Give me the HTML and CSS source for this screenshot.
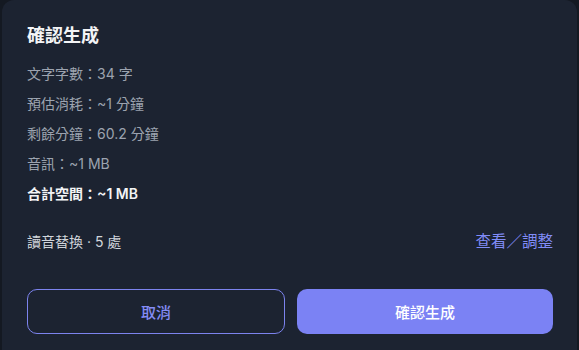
FILE: index.html
```html
<!DOCTYPE html>
<html>

<head>
  <meta charset="UTF-8">
  <meta name="viewport" content="width=device-width, initial-scale=1.0">
  <title>確認生成</title>
  <link rel="stylesheet" href="styles.css">
</head>

<body>
  <div class="dialog">
    <h2 class="title">確認生成</h2>
    <ul class="stats">
      <li>文字字數：34 字</li>
      <li>預估消耗：~1 分鐘</li>
      <li>剩餘分鐘：60.2 分鐘</li>
      <li>音訊：~1 MB</li>
      <li class="total">合計空間：~1 MB</li>
    </ul>
    <div class="replace">
      <span>讀音替換 · 5 處</span>
      <a href="#" class="link">查看／調整</a>
    </div>
    <div class="actions">
      <button class="btn btn-outline">取消</button>
      <button class="btn btn-primary">確認生成</button>
    </div>
  </div>
</body>

</html>
```

FILE: styles.css
```css
html {
  background: #141922;
}

body {
  margin: 0;
  font-family: "Inter", "Noto Sans CJK TC", sans-serif;
  overflow: hidden;
}

.dialog {
  margin-left: 2px;
  width: 575px;
  height: 350px;
  box-sizing: border-box;
  padding: 24px 24px 0 25px;
  background: #1c2331;
  border-radius: 12px 12px 0 0;
}

.title {
  margin: 0 0 16px;
  font-size: 18px;
  line-height: 24px;
  font-weight: 700;
  color: #f3f4f6;
}

.stats {
  list-style: none;
  margin: 0;
  padding: 0;
  display: flex;
  flex-direction: column;
  gap: 10px;
}

.stats li {
  font-size: 14px;
  line-height: 20px;
  color: #9ca3af;
}

.stats .total {
  color: #f3f4f6;
  font-weight: 600;
}

.replace {
  display: flex;
  justify-content: space-between;
  align-items: center;
  margin-top: 27px;
  font-size: 14px;
  line-height: 22px;
  color: #d1d5db;
}

.link {
  font-size: 15.5px;
  color: #818cf8;
  text-decoration: none;
}

.actions {
  display: flex;
  gap: 12px;
  margin-top: 36px;
}

.btn {
  flex: 1;
  height: 45px;
  border-radius: 10px;
  font-family: inherit;
  font-size: 15px;
  font-weight: 500;
}

.btn-outline {
  background: transparent;
  border: 1px solid #7c83ee;
  color: #848cf5;
}

.btn-primary {
  background: #7b82f4;
  border: 0;
  color: #ffffff;
}
```
